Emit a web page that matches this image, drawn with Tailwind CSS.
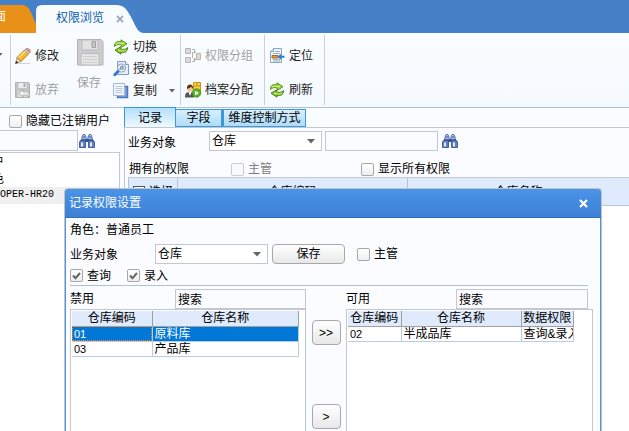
<!DOCTYPE html>
<html lang="zh-CN">
  <head>
    <meta charset="utf-8" />
    <title>权限浏览</title>
    <script src="https://cdn.jsdelivr.net/npm/@tailwindcss/browser@4"></script>
  </head>

  <body class="relative flex h-screen flex-col overflow-hidden bg-[#fbfcff] font-['Liberation_Sans','Noto_Sans_CJK_SC',sans-serif] text-[12px] leading-4 text-black">
    <!-- shared icons -->
    <svg class="hidden">
      <symbol id="binoculars" viewBox="0 0 16 16">
        <path d="M4 1.500h2l1 2.500 .5 3h-5L3 4zM10 1.500h2L13 4l.5 3h-5L9 4z" fill="#a9bce2" stroke="#4a68ab" stroke-width=".8" />
        <path d="M6.500 6h3v3h-3z" fill="#33549b" />
        <path d="M.5 9l1.500-2h4.500v7.500h-6zM9.500 7H14l1.500 2v5.500h-6z" fill="#5c7fc4" stroke="#2b478a" stroke-width=".8" />
        <path d="M2 9.500h2v4H2zM11 9.500h2v4h-2z" fill="#e3ecfb" />
        <path d="M3.500 4h3M9.500 4h3M2 7h4.500M9.500 7H14" stroke="#2b478a" stroke-width=".8" />
      </symbol>
      <symbol id="recycle" viewBox="0 0 16 16">
        <path d="M1.500 7.500C1 4 4 1.700 8 2.800V.8l6 4-5.500 3.400V6.300C5.500 5 3.500 5.500 1.500 7.500z" fill="#9bd935" stroke="#4a8a10" stroke-width=".9" />
        <path d="M14.500 8.500c.5 3.500-2.500 5.800-6.500 4.700v2l-6-4 5.500-3.400v1.900c3 1.300 5 .8 7-1.200z" fill="#84c823" stroke="#3d770c" stroke-width=".9" />
        <path d="M3 5.200c1.500-1.500 4-1.500 6-.5l2-.2M13 10.800c-1.500 1.500-4 1.500-6 .5l-2 .2" fill="none" stroke="#d9f59a" stroke-width=".9" />
      </symbol>
      <symbol id="caret" viewBox="0 0 8 5">
        <path d="M0 0h8L4 4.500z" fill="#666" />
      </symbol>
      <symbol id="tick" viewBox="0 0 13 13">
        <path d="M3 6.500l2.500 2.700L10 4" fill="none" stroke="#666" stroke-width="2" />
      </symbol>
    </svg>

    <!-- document tabs -->
    <header class="flex h-[33px] shrink-0 items-end bg-[#4681c8]">
      <nav class="flex h-7">
        <a href="#" class="relative flex w-9 items-center text-white">
          <svg class="absolute inset-0" width="36" height="28" viewBox="0 0 36 28">
            <path d="M0 0h22c5 0 8 4 10 10l4 9v9H0z" fill="#e89018" />
          </svg>
          <span class="relative -ml-[6px] pb-1">面</span>
        </a>
        <a href="#" class="relative flex w-[108px] items-center pl-5 text-[#0a5cad]">
          <svg class="absolute inset-0" width="108" height="28" viewBox="0 0 108 28">
            <path d="M0 28V6q0-6 6-6h74c9 0 11 5 15 12l5 10q3 6 8 6z" fill="#f8fcff" />
          </svg>
          <span class="relative pb-[2px]">权限浏览</span>
          <svg class="relative ml-3" width="8" height="8" viewBox="0 0 8 8">
            <path d="M1 1l6 6M7 1L1 7" stroke="#a4adb8" stroke-width="2" />
          </svg>
        </a>
      </nav>
    </header>

    <!-- ribbon -->
    <div class="flex h-[75px] shrink-0 border-b border-[#b0c0d0] bg-gradient-to-b from-[#fafdff] to-[#f5faff] py-[2px] text-[#222]">
      <div class="flex w-[11px] shrink-0 items-start overflow-hidden border-r border-[#cbd0d6] pt-[18px]">
        <svg class="-ml-1" width="7" height="4"><use href="#caret" /></svg>
      </div>

      <div class="flex w-[170px] shrink-0 border-r border-[#cbd0d6] pl-1">
        <div class="flex w-[62px] flex-col gap-[18px] pt-[13px]">
          <button type="button" class="flex items-center gap-1">
            <svg width="16" height="16" viewBox="0 0 16 16">
              <path d="M2 15.500h13" stroke="#d2d2d2" />
              <path d="M.5 15.500L2 9.500 6 13.500z" fill="#f3dcb4" stroke="#777" stroke-width=".6" />
              <path d="M.3 15.700l.9-3 2.100 2.100z" fill="#222" />
              <path d="M2 9.500L9.500 2 13.500 6 6 13.500z" fill="#f9b62a" stroke="#a9650b" stroke-width=".8" />
              <path d="M3.500 10L10.500 3" stroke="#ffe890" stroke-width="1.500" />
              <path d="M9.500 2L11 .8 14.800 4.600 13.500 6z" fill="#d5d5d5" stroke="#888" stroke-width=".6" />
              <path d="M11 .8c1-.8 2-.8 3.200.4s1.400 2.200.6 3.400z" fill="#ee9b8e" stroke="#b06050" stroke-width=".6" />
            </svg>
            修改
          </button>
          <button type="button" class="flex items-center gap-1 text-[#a0a0a0]" disabled>
            <svg width="16" height="16" viewBox="0 0 16 16">
              <path d="M.5.500h13l1 1v14H.5z" fill="#c3c3c3" stroke="#b2b2b2" />
              <path d="M3.500 1h8v5h-8z" fill="#ececec" />
              <path d="M8.500 1.500h2v3.500h-2z" fill="#aaa" />
              <path d="M3 9h9v6H3z" fill="#e0e0e0" />
              <path d="M4 11l4-3v2h3c2.500 0 4 2 3 5-1-2-2-2.500-6-2v2z" fill="#f6f6f6" stroke="#999" stroke-width=".7" />
            </svg>
            放弃
          </button>
        </div>
        <button type="button" class="flex w-9 flex-col items-start pt-1 text-[#a0a0a0]" disabled>
          <svg width="27" height="27" viewBox="0 0 27 27">
            <path d="M.5.500h23.500l2 2V26H.5z" fill="#cdcdcf" stroke="#b2b2b4" />
            <path d="M5 1h16v10H5z" fill="#e2e2e4" stroke="#b4b4b6" stroke-width=".8" />
            <path d="M15 2.500h3.500v6H15z" fill="#c4c4c6" stroke="#98989a" stroke-width=".8" />
            <path d="M4 14.500h18V26H4z" fill="#e4e4e4" stroke="#b4b4b4" stroke-width=".8" />
            <path d="M6 17.500h14M6 20.500h14M6 23.500h14" stroke="#cfcfcf" />
          </svg>
          <span class="pt-[9px]">保存</span>
        </button>
        <div class="flex flex-col gap-[6px] pt-1">
          <button type="button" class="flex items-center gap-1">
            <svg width="16" height="16"><use href="#recycle" /></svg>
            切换
          </button>
          <button type="button" class="flex items-center gap-1">
            <svg width="16" height="16" viewBox="0 0 16 16">
              <path d="M4.500.500h8l3 3v10h-11z" fill="#e6effb" stroke="#7c9bcb" />
              <path d="M12.500.500v3h3" fill="#fff" stroke="#7c9bcb" />
              <circle cx="8.500" cy="7" r="4" fill="#f4f8ff" stroke="#8ba3c4" stroke-width="1.200" />
              <path d="M7 9c0-3 1-4 3-4M10 5v3H8" fill="none" stroke="#667f9c" stroke-width="1.200" />
              <path d="M5 10.500L1.800 13.700" stroke="#3f78cf" stroke-width="3" stroke-linecap="round" />
            </svg>
            授权
          </button>
          <button type="button" class="flex items-center gap-1">
            <svg width="16" height="16" viewBox="0 0 16 16">
              <path d="M12 3.500h2.500v11h-10V13" fill="#7ea3dc" stroke="#4a78bd" stroke-width="1.500" />
              <path d="M.5.500h11v12H.5z" fill="#f3f7fd" stroke="#a3b5d0" />
              <path d="M2.500 3.500h7M2.500 5.500h7M2.500 7.500h7M2.500 9.500h7" stroke="#b9c7da" />
            </svg>
            复制
            <svg class="ml-2" width="6" height="4" viewBox="0 0 8 5" preserveAspectRatio="none"><use href="#caret" /></svg>
          </button>
        </div>
      </div>

      <div class="flex w-[84px] shrink-0 flex-col gap-[18px] border-r border-[#cbd0d6] pl-1 pt-[13px]">
        <button type="button" class="flex items-center gap-1 text-[#a0a0a0]" disabled>
          <svg width="16" height="16" viewBox="0 0 16 16">
            <path d="M.5.500h5v5h-5zM.5 9.500h5v5h-5zM11.500 5.500h4v6h-4z" fill="#dadada" stroke="#b6b6b6" />
            <path d="M7 1.500h2.500v2M7 13.500h2.500v-2M7.500 4v6" fill="none" stroke="#b0b0b0" />
            <path d="M8 3.500h3.500l-1.800 2.200zM8 12h3.500L9.700 9.800z" fill="#aaa" />
          </svg>
          权限分组
        </button>
        <button type="button" class="flex items-center gap-1">
          <svg width="16" height="16" viewBox="0 0 16 16">
            <path d="M8.500.500h7v11h-7z" fill="#f9cf3f" stroke="#c9921f" />
            <path d="M9 4h6M9 7.500h6M12 1v3" stroke="#c9921f" />
            <path d="M0 15.500c0-4 1-5.500 5-5.500s4 2 4 5.500z" fill="#565656" />
            <path d="M3.500 10L5 14l1.500-4z" fill="#fff" />
            <circle cx="5" cy="6.800" r="3" fill="#f2c394" />
            <path d="M2 7c-.5-3 1-4.500 3-4.500S8.500 4 8 7L6.500 5z" fill="#5a3a1e" />
            <circle cx="11.500" cy="11" r="4.200" fill="#5fb62a" stroke="#3a8c1e" stroke-width=".8" />
            <path d="M10.200 8.700v4.600l3.600-2.300z" fill="#fff" />
          </svg>
          档案分配
        </button>
      </div>

      <div class="flex w-[60px] shrink-0 flex-col gap-[18px] border-r border-[#cbd0d6] pl-1 pt-[13px]">
        <button type="button" class="flex items-center gap-1">
          <svg width="16" height="16" viewBox="0 0 16 16">
            <path d="M4.500.500h8v14H1.500v-11z" fill="#f3f7fd" stroke="#8ba2c6" />
            <path d="M1.500 3.500h3v-3" fill="#dce8f8" stroke="#8ba2c6" />
            <path d="M6 3.500h5M4 5.500h7M4 11.500h7M4 13h7" stroke="#a0afc4" />
            <path d="M3 7.500h6v2.500H3z" fill="#f29a2e" stroke="#8c5a18" stroke-width=".8" />
            <path d="M8.500 8.700l3.500-3v2h3.500v2H12v2z" fill="#2f7fc9" />
          </svg>
          定位
        </button>
        <button type="button" class="flex items-center gap-1">
          <svg width="16" height="16"><use href="#recycle" /></svg>
          刷新
        </button>
      </div>
    </div>

    <main class="flex min-h-0 flex-1">
      <!-- user list -->
      <aside class="flex w-[120px] shrink-0 flex-col">
        <label class="flex h-[22px] items-center gap-1 pl-[9px] pt-1">
          <input type="checkbox" class="size-[13px] shrink-0 appearance-none rounded-[2px] border border-[#a8a8a8] bg-gradient-to-b from-white to-[#eee]" />
          <span class="whitespace-nowrap">隐藏已注销用户</span>
        </label>
        <div class="flex items-center gap-px">
          <input type="text" aria-label="查找用户" class="h-[21px] w-[78px] border border-l-0 border-[#c3c7cf] bg-[#fbfcff]" />
          <button type="button" aria-label="查找"><svg width="16" height="16"><use href="#binoculars" /></svg></button>
        </div>
        <ul class="mt-px flex-1 overflow-hidden border-r border-t border-[#c3c7cf] bg-white">
          <li class="h-[17px] pt-px"><span class="-ml-2">户</span></li>
          <li class="h-[17px] pt-px"><span class="-ml-2">色</span></li>
          <li class="h-[17px] bg-[#f0f0f0] font-['Liberation_Mono',monospace] text-[10px]">OPER-HR20</li>
        </ul>
      </aside>

      <!-- record permissions -->
      <section class="ml-1 flex min-w-0 flex-1 flex-col">
        <div class="flex h-5 items-end border-b border-[#c3c7cf]">
          <button type="button" class="h-5 w-[52px] border border-b-0 border-[#3a9ad9] bg-gradient-to-b from-[#b5dffa] to-[#eef9ff]">记录</button>
          <button type="button" class="h-[18px] w-[46px] border border-l-0 border-[#3a9ad9] bg-gradient-to-b from-[#d8effd] to-[#aedcfa]">字段</button>
          <button type="button" class="h-[18px] w-[84px] whitespace-nowrap border border-l-2 border-[#3a9ad9] bg-gradient-to-b from-[#d8effd] to-[#aedcfa]">维度控制方式</button>
        </div>
        <div class="flex flex-1 flex-col border-l border-[#c3c7cf] pl-[3px]">
          <div class="flex items-center pt-[3px]">
            <label for="target" class="w-[81px] pt-1">业务对象</label>
            <div class="relative">
              <select id="target" class="h-5 w-[113px] appearance-none border border-[#c3c7cf] bg-white pb-px pl-[2px] leading-4"><option>仓库</option></select>
              <svg class="pointer-events-none absolute right-[7px] top-2" width="8" height="5"><use href="#caret" /></svg>
            </div>
            <input type="text" aria-label="查找内容" class="ml-[3px] h-5 w-[113px] border border-[#c3c7cf] bg-[#fbfcff]" />
            <button type="button" aria-label="查找记录" class="ml-1"><svg width="16" height="16"><use href="#binoculars" /></svg></button>
          </div>
          <div class="flex h-[26px] items-end">
            <span class="w-[103px] pl-px">拥有的权限</span>
            <label class="flex w-[130px] items-center gap-1 text-[#808080]">
              <input type="checkbox" disabled class="size-[13px] appearance-none rounded-[2px] border border-[#ccc] bg-[#fafafa]" />
              主管
            </label>
            <label class="flex items-center gap-1">
              <input type="checkbox" class="size-[13px] appearance-none rounded-[2px] border border-[#a8a8a8] bg-gradient-to-b from-white to-[#eee]" />
              显示所有权限
            </label>
          </div>
          <div class="flex-1 overflow-hidden border-t border-[#c3c7cf] bg-white">
            <table class="w-full table-fixed border-collapse">
              <tr class="h-[27px] border-b border-l border-[#b0c4de] bg-[#dfebfd]">
                <th class="w-[49px] border-r border-[#b0c4de] p-0 pt-[2px] font-normal">
                  <label class="flex items-center gap-1 pl-1">
                    <input type="checkbox" class="size-3 shrink-0 appearance-none border border-[#555] bg-white" />
                    <span class="whitespace-nowrap">选择</span>
                  </label>
                </th>
                <th class="w-[230px] border-r border-[#b0c4de] p-0 pt-[2px] font-normal">仓库编码</th>
                <th class="p-0 pt-[2px] font-normal">仓库名称</th>
              </tr>
            </table>
          </div>
        </div>
      </section>
    </main>

    <!-- record permission dialog -->
    <div role="dialog" aria-labelledby="dialog-title" class="absolute bottom-0 left-16 top-[188px] flex w-[538px] flex-col overflow-hidden rounded-t-[4px] border border-b-0 border-[#c0c4ca] bg-[#fbfcff]">
      <div class="flex h-[29px] shrink-0 items-center justify-between border-b border-[#2d6fc2] bg-gradient-to-b from-[#4b94e8] to-[#3c80d4] pl-1 pr-[13px] text-white">
        <h2 id="dialog-title">记录权限设置</h2>
        <button type="button" aria-label="关闭">
          <svg width="9" height="9" viewBox="0 0 9 9"><path d="M1 1l7 7M8 1L1 8" stroke="#fff" stroke-width="2.200" /></svg>
        </button>
      </div>

      <div class="flex flex-1 flex-col border-x border-[#4b94e8] px-1">
        <p class="pt-1">角色：普通员工</p>
        <div class="flex items-center pt-[6px]">
          <label for="dialog-target" class="w-[85px] pt-[2px]">业务对象</label>
          <div class="relative">
            <select id="dialog-target" class="h-5 w-[113px] appearance-none border border-[#c3c7cf] bg-white pb-px pl-[2px] leading-4"><option>仓库</option></select>
            <svg class="pointer-events-none absolute right-[7px] top-2" width="8" height="5"><use href="#caret" /></svg>
          </div>
          <button type="button" class="ml-1 h-5 w-[73px] rounded-[4px] border border-[#a8a8a8] bg-gradient-to-b from-white to-[#e8e8e8]">保存</button>
          <label class="ml-3 flex items-center gap-1">
            <input type="checkbox" class="size-[13px] appearance-none rounded-[2px] border border-[#a8a8a8] bg-gradient-to-b from-white to-[#eee]" />
            主管
          </label>
        </div>
        <div class="mr-2 flex h-[22px] gap-4 border-b border-[#a9c1da] pt-[2px]">
          <label class="relative flex items-center gap-1">
            <input type="checkbox" checked class="size-[13px] appearance-none rounded-[2px] border border-[#a8a8a8] bg-gradient-to-b from-white to-[#eee]" />
            <svg class="pointer-events-none absolute left-0" width="13" height="13"><use href="#tick" /></svg>
            查询
          </label>
          <label class="relative flex items-center gap-1">
            <input type="checkbox" checked class="size-[13px] appearance-none rounded-[2px] border border-[#a8a8a8] bg-gradient-to-b from-white to-[#eee]" />
            <svg class="pointer-events-none absolute left-0" width="13" height="13"><use href="#tick" /></svg>
            录入
          </label>
        </div>

        <div class="flex flex-1 pt-[3px]">
          <div class="flex w-[236px] flex-col">
            <div class="flex">
              <label for="search-off" class="w-[105px] pt-[2px]">禁用</label>
              <input id="search-off" type="text" value="搜索" class="h-5 min-w-0 flex-1 border border-[#c3c7cf] bg-[#fbfcff] px-[2px] pb-[2px]" />
            </div>
            <div class="flex-1 border border-b-0 border-[#c3c7cf] bg-white p-px">
              <table class="w-[227px] table-fixed border-collapse">
                <tr class="h-[15px] border-b border-[#a0a0a0] bg-[#dfebfd] leading-[14px]">
                  <th class="w-20 border-r border-[#a0a0a0] p-0 font-normal">仓库编码</th>
                  <th class="border-r border-[#a0a0a0] p-0 font-normal">仓库名称</th>
                </tr>
                <tr class="h-[15px] border-b border-[#b8cce4] bg-[#0078d7] leading-[14px] text-white">
                  <td class="p-0 pl-[2px] text-[11px] outline-1 -outline-offset-1 outline-dotted outline-[#ff8728]">01</td>
                  <td class="border-x border-[#b8cce4] p-0 pl-[2px]">原料库</td>
                </tr>
                <tr class="h-[15px] border-b border-[#b8cce4] leading-[14px]">
                  <td class="p-0 pl-[2px] text-[11px]">03</td>
                  <td class="border-x border-[#b8cce4] p-0 pl-[2px]">产品库</td>
                </tr>
              </table>
            </div>
          </div>

          <div class="flex w-10 flex-col items-center gap-[59px] pt-[31px]">
            <button type="button" class="h-[25px] w-[29px] rounded-[4px] border border-[#a8a8a8] bg-gradient-to-b from-white to-[#e8e8e8]">&gt;&gt;</button>
            <button type="button" class="h-[25px] w-[29px] rounded-[4px] border border-[#a8a8a8] bg-gradient-to-b from-white to-[#e8e8e8]">&gt;</button>
          </div>

          <div class="flex w-[247px] flex-col">
            <div class="flex pr-[5px]">
              <label for="search-on" class="w-[110px] pt-[2px]">可用</label>
              <input id="search-on" type="text" value="搜索" class="h-5 min-w-0 flex-1 border border-[#c3c7cf] bg-[#fbfcff] px-[2px] pb-[2px]" />
            </div>
            <div class="flex-1 border border-b-0 border-[#c3c7cf] bg-white p-px">
              <table class="w-[226px] table-fixed border-collapse">
                <tr class="h-[15px] border-b border-[#a0a0a0] bg-[#dfebfd] leading-[14px]">
                  <th class="w-[53px] border-r border-[#a0a0a0] p-0 font-normal">仓库编码</th>
                  <th class="w-[120px] border-r border-[#a0a0a0] p-0 font-normal">仓库名称</th>
                  <th class="border-r border-[#a0a0a0] p-0 font-normal">数据权限</th>
                </tr>
                <tr class="h-[15px] border-b border-[#b8cce4] leading-[14px]">
                  <td class="border-r border-[#b8cce4] p-0 pl-[2px] text-[11px]">02</td>
                  <td class="border-r border-[#b8cce4] p-0 pl-[2px]">半成品库</td>
                  <td class="overflow-hidden whitespace-nowrap border-r border-[#b8cce4] p-0 pl-[2px]">查询&amp;录入</td>
                </tr>
              </table>
            </div>
          </div>
        </div>
      </div>
    </div>
  </body>
</html>
